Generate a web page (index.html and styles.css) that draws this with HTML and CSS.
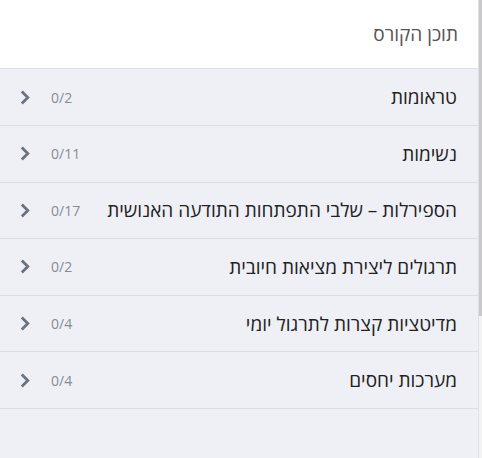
FILE: index.html
```html
<!DOCTYPE html>
<html lang="he" dir="rtl">
<head>
<meta charset="utf-8">
<link rel="stylesheet" href="styles.css">
</head>
<body>
<div class="page">
  <div class="panel">
    <div class="header">תוכן הקורס</div>
    <ul class="list">
      <li class="row"><span class="title">טראומות</span><span class="meta"><span class="count">0/2</span><svg class="chev" viewBox="0 0 10 15" width="10" height="15"><path d="M1.8 1.5 L7.8 7.5 L1.8 13.5" fill="none" stroke="currentColor" stroke-width="2.8"/></svg></span></li>
      <li class="row"><span class="title">נשימות</span><span class="meta"><span class="count">0/11</span><svg class="chev" viewBox="0 0 10 15" width="10" height="15"><path d="M1.8 1.5 L7.8 7.5 L1.8 13.5" fill="none" stroke="currentColor" stroke-width="2.8"/></svg></span></li>
      <li class="row"><span class="title">הספירלות – שלבי התפתחות התודעה האנושית</span><span class="meta"><span class="count">0/17</span><svg class="chev" viewBox="0 0 10 15" width="10" height="15"><path d="M1.8 1.5 L7.8 7.5 L1.8 13.5" fill="none" stroke="currentColor" stroke-width="2.8"/></svg></span></li>
      <li class="row"><span class="title">תרגולים ליצירת מציאות חיובית</span><span class="meta"><span class="count">0/2</span><svg class="chev" viewBox="0 0 10 15" width="10" height="15"><path d="M1.8 1.5 L7.8 7.5 L1.8 13.5" fill="none" stroke="currentColor" stroke-width="2.8"/></svg></span></li>
      <li class="row"><span class="title">מדיטציות קצרות לתרגול יומי</span><span class="meta"><span class="count">0/4</span><svg class="chev" viewBox="0 0 10 15" width="10" height="15"><path d="M1.8 1.5 L7.8 7.5 L1.8 13.5" fill="none" stroke="currentColor" stroke-width="2.8"/></svg></span></li>
      <li class="row"><span class="title">מערכות יחסים</span><span class="meta"><span class="count">0/4</span><svg class="chev" viewBox="0 0 10 15" width="10" height="15"><path d="M1.8 1.5 L7.8 7.5 L1.8 13.5" fill="none" stroke="currentColor" stroke-width="2.8"/></svg></span></li>
    </ul>
  </div>
  <div class="scrollbar"><div class="thumb"></div></div>
</div>
</body>
</html>
```
FILE: styles.css
```css
html, body {
  margin: 0;
  padding: 0;
  height: 100%;
}
body {
  font-family: "Open Sans", "Noto Sans", sans-serif;
  background: #eff0f5;
  overflow: hidden;
}
.page {
  display: flex;
  flex-direction: row;
  direction: ltr;
  height: 458px;
  width: 482px;
}
.scrollbar {
  width: 3px;
  background: #f3f3f4;
  display: flex;
  flex-direction: column;
}
.thumb {
  height: 316px;
  background: #c9c9cc;
}
.panel {
  direction: rtl;
  flex: 1;
  border-right: 1px solid #dfe0e5;
  background: #eff0f5;
  display: flex;
  flex-direction: column;
}
.header {
  height: 68.2px;
  flex-shrink: 0;
  background: #ffffff;
  border-bottom: 1px solid #dfe0e5;
  color: #555;
  font-size: 19px;
  padding-right: 20px;
  display: flex;
  align-items: center;
}
.list {
  list-style: none;
  margin: 0;
  padding: 0;
}
.row {
  height: 55.67px;
  border-bottom: 1px solid #dcdde2;
  display: flex;
  align-items: center;
  justify-content: space-between;
  padding: 0 21px 0 20px;
}
.title {
  font-size: 19px;
  color: #222;
}
.meta {
  display: flex;
  align-items: center;
  gap: 21px;
}
.count {
  font-size: 14px;
  color: #878b93;
}
.chev {
  display: block;
  color: #6b7280;
}
```
